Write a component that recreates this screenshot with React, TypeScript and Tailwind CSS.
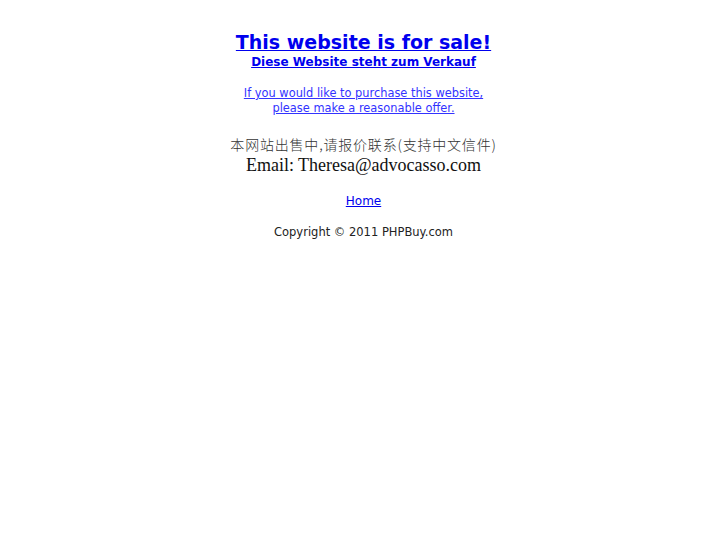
export default function App() {
  return (
    <div className="min-h-screen bg-white pt-[31px] text-center" style={{ fontFamily: '"DejaVu Sans", sans-serif' }}>
      <a href="#" className="block text-[19px] font-bold leading-[23px] text-[#0000ee] underline">
        This website is for sale!
      </a>
      <a href="#" className="block text-[12px] font-bold leading-[16px] text-[#0000ee] underline">
        Diese Website steht zum Verkauf
      </a>
      <div className="mt-[16px] text-[11.4px] leading-[15px]">
        <a href="#" className="text-[#3333ff] underline">
          If you would like to purchase this website,
          <br />
          please make a reasonable offer.
        </a>
      </div>
      <p
        className="mt-[18px] text-[14px] leading-[20px] tracking-[0.8px] text-[#333]"
        style={{ fontFamily: '"Noto Sans CJK SC", sans-serif', fontWeight: 300 }}
      >
        本网站出售中,请报价联系(支持中文信件)
      </p>
      <p className="text-[18px] leading-[22px] text-[#111]" style={{ fontFamily: '"Liberation Serif", serif' }}>
        Email: Theresa@advocasso.com
      </p>
      <div className="mt-[17px] text-[12px] leading-[16px]">
        <a href="#" className="text-[#0000ee] underline">Home</a>
      </div>
      <p className="mt-[15px] text-[11.5px] leading-[16px] text-[#222]">Copyright © 2011 PHPBuy.com</p>
    </div>
  );
}
